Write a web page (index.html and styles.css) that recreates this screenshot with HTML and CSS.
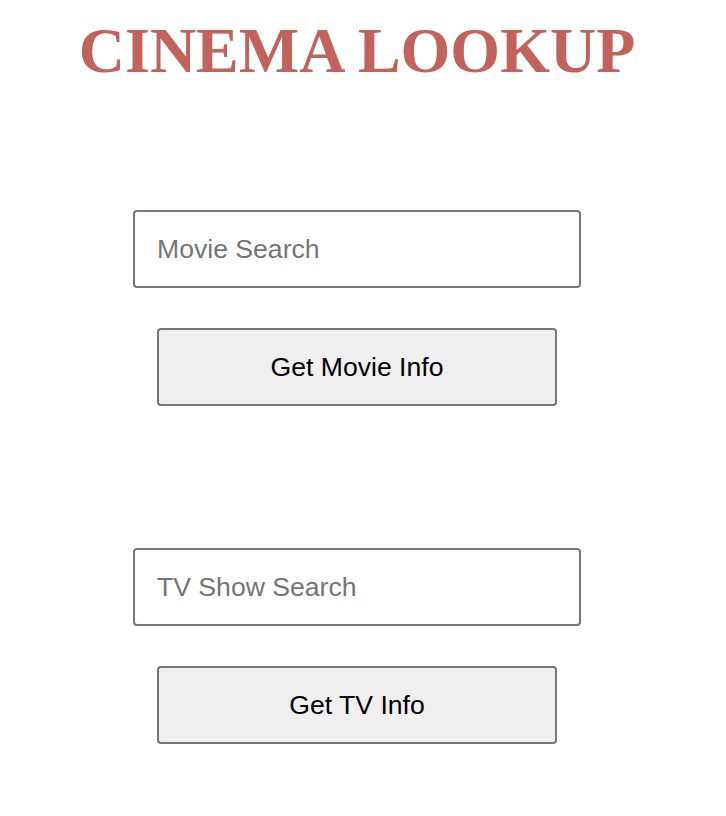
FILE: index.html
```html
<!DOCTYPE html>
<html>
<head>
<meta charset="utf-8">
<title>Cinema Lookup</title>
<link rel="stylesheet" href="styles.css">
</head>
<body>
<main class="page">
  <h1 class="title">CINEMA LOOKUP</h1>
  <section class="search first">
    <input class="field" type="text" placeholder="Movie Search">
    <button class="btn" type="button">Get Movie Info</button>
  </section>
  <section class="search second">
    <input class="field" type="text" placeholder="TV Show Search">
    <button class="btn" type="button">Get TV Info</button>
  </section>
</main>
</body>
</html>
```

FILE: styles.css
```css
html, body {
  margin: 0;
  padding: 0;
  background: #ffffff;
}

.page {
  width: 714px;
  display: flex;
  flex-direction: column;
  align-items: center;
}

.title {
  margin: 14px 0 0 0;
  font-family: "Liberation Serif", "Times New Roman", serif;
  font-weight: bold;
  font-size: 64px;
  line-height: 74px;
  color: #c1635c;
  text-align: center;
}

.search {
  display: flex;
  flex-direction: column;
  align-items: center;
  gap: 40px;
}

.first {
  margin-top: 122px;
}

.second {
  margin-top: 142px;
}

.field {
  box-sizing: border-box;
  width: 448px;
  height: 78px;
  margin: 0;
  padding: 0 22px;
  border: 2px solid #767676;
  border-radius: 4px;
  font-family: "Liberation Sans", Arial, sans-serif;
  font-size: 26.6px;
  color: #000000;
  background: #ffffff;
  outline: none;
}

.field::placeholder {
  color: #757575;
  opacity: 1;
}

.btn {
  box-sizing: border-box;
  width: 400px;
  height: 78px;
  margin: 0;
  padding: 0;
  border: 2px solid #767676;
  border-radius: 4px;
  background: #efefef;
  font-family: "Liberation Sans", Arial, sans-serif;
  font-size: 26.6px;
  color: #000000;
}
```
